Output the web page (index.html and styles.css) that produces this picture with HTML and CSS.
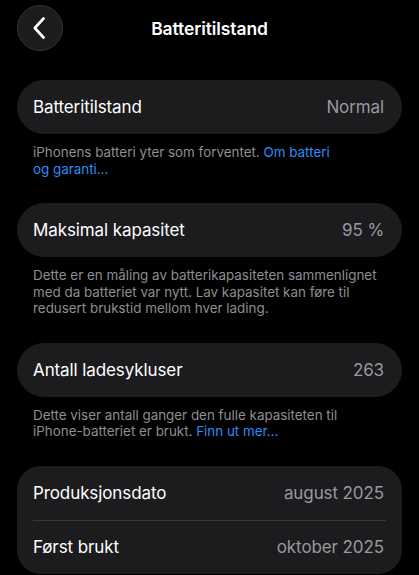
FILE: index.html
```html
<!DOCTYPE html>
<html lang="nb">
<head>
    <meta charset="UTF-8">
    <meta name="viewport" content="width=device-width, initial-scale=1.0">
    <title>Batteritilstand</title>
    <link rel="stylesheet" href="styles.css">
</head>
<body>
    <header class="top-bar">
        <button class="back-button" aria-label="Tilbake">
            <svg width="12" height="22" viewBox="0 0 12 22">
                <path d="M10.5 1.5 L1.8 11 L10.5 20.5" fill="none" stroke="#fff" stroke-width="2.6" stroke-linecap="round" stroke-linejoin="round"/>
            </svg>
        </button>
        <h1>Batteritilstand</h1>
        <span></span>
    </header>

    <main class="settings">
        <div class="group pill">
            <div class="row">
                <span class="label">Batteritilstand</span>
                <span class="value">Normal</span>
            </div>
        </div>
        <p class="note">iPhonens batteri yter som forventet. <a href="#">Om batteri<br>og garanti…</a></p>

        <div class="group pill">
            <div class="row">
                <span class="label">Maksimal kapasitet</span>
                <span class="value">95 %</span>
            </div>
        </div>
        <p class="note">Dette er en måling av batterikapasiteten sammenlignet<br>med da batteriet var nytt. Lav kapasitet kan føre til<br>redusert brukstid mellom hver lading.</p>

        <div class="group pill">
            <div class="row">
                <span class="label">Antall ladesykluser</span>
                <span class="value">263</span>
            </div>
        </div>
        <p class="note">Dette viser antall ganger den fulle kapasiteten til<br>iPhone-batteriet er brukt. <a href="#">Finn ut mer…</a></p>

        <div class="group">
            <div class="row">
                <span class="label">Produksjonsdato</span>
                <span class="value">august 2025</span>
            </div>
            <div class="row">
                <span class="label">Først brukt</span>
                <span class="value">oktober 2025</span>
            </div>
        </div>
    </main>
</body>
</html>
```

FILE: styles.css
```css
body {
    font-family: Inter, "Noto Sans", sans-serif;
    background-color: #000;
    color: #fff;
    margin: 0;
    padding: 0;
}

.top-bar {
    display: grid;
    grid-template-columns: 46px 1fr 46px;
    align-items: center;
    padding: 5px 17px 0;
}

.back-button {
    width: 46px;
    height: 46px;
    border-radius: 50%;
    background-color: #1c1c1e;
    border: 1px solid #333336;
    display: flex;
    align-items: center;
    justify-content: center;
    padding: 0 2px 0 0;
    cursor: pointer;
}

.top-bar h1 {
    margin: 0;
    font-size: 17.5px;
    font-weight: 600;
    text-align: center;
    letter-spacing: -0.1px;
}

.settings {
    padding: 29px 17px 0;
}

.group {
    background-color: #1c1c1e;
    border-radius: 24px;
    overflow: hidden;
}

.group.pill {
    border-radius: 27px;
}

.row {
    display: flex;
    justify-content: space-between;
    align-items: center;
    height: 54px;
    padding: 0 18px 0 16px;
    font-size: 17px;
    letter-spacing: -0.1px;
}

.group .row + .row {
    height: 53px;
    border-top: 1px solid #38383a;
    margin: 0 16px;
    padding: 0 2px 0 0;
}

.value {
    color: #98989f;
}

.note {
    margin: 10px 0 26px;
    padding: 0 0 0 16px;
    font-size: 13.4px;
    line-height: 16.5px;
    color: #8e8e93;
}

.note a {
    color: #2f8cf5;
    text-decoration: none;
}
```
